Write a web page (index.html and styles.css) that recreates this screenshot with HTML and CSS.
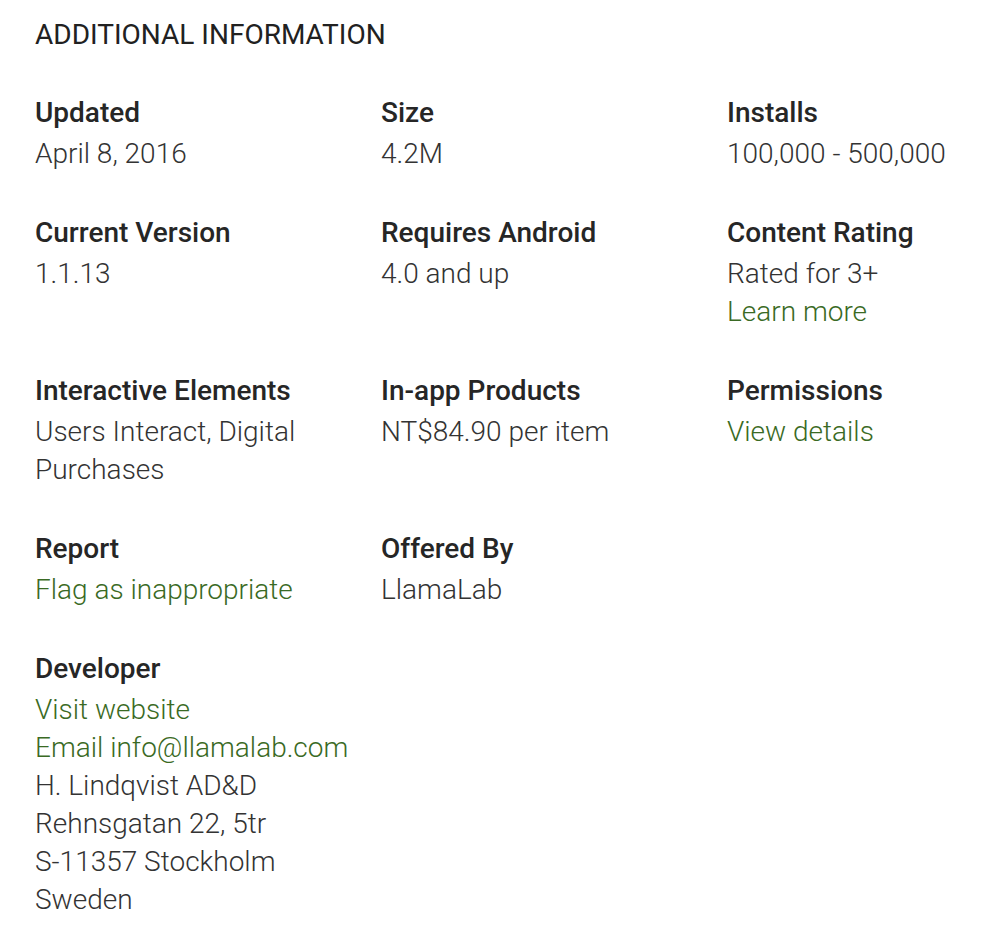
FILE: index.html
```html
<!DOCTYPE html>
<html lang="en">
<head>
<meta charset="utf-8">
<title>Additional Information</title>
<link rel="stylesheet" href="styles.css">
</head>
<body>
<section class="details">
  <h2 class="details-title">ADDITIONAL INFORMATION</h2>
  <div class="details-grid">
    <div class="meta">
      <div class="meta-label">Updated</div>
      <div class="meta-value">April 8, 2016</div>
    </div>
    <div class="meta">
      <div class="meta-label">Size</div>
      <div class="meta-value">4.2M</div>
    </div>
    <div class="meta">
      <div class="meta-label">Installs</div>
      <div class="meta-value">100,000 - 500,000</div>
    </div>

    <div class="meta">
      <div class="meta-label">Current Version</div>
      <div class="meta-value">1.1.13</div>
    </div>
    <div class="meta">
      <div class="meta-label">Requires Android</div>
      <div class="meta-value">4.0 and up</div>
    </div>
    <div class="meta">
      <div class="meta-label">Content Rating</div>
      <div class="meta-value">Rated for 3+</div>
      <a class="meta-link" href="#">Learn more</a>
    </div>

    <div class="meta">
      <div class="meta-label">Interactive Elements</div>
      <div class="meta-value">Users Interact, Digital Purchases</div>
    </div>
    <div class="meta">
      <div class="meta-label">In-app Products</div>
      <div class="meta-value">NT$84.90 per item</div>
    </div>
    <div class="meta">
      <div class="meta-label">Permissions</div>
      <a class="meta-link" href="#">View details</a>
    </div>

    <div class="meta">
      <div class="meta-label">Report</div>
      <a class="meta-link" href="#">Flag as inappropriate</a>
    </div>
    <div class="meta meta-wide">
      <div class="meta-label">Offered By</div>
      <div class="meta-value">LlamaLab</div>
    </div>

    <div class="meta">
      <div class="meta-label">Developer</div>
      <a class="meta-link" href="#">Visit website</a>
      <a class="meta-link" href="#">Email info@llamalab.com</a>
      <div class="meta-value">H. Lindqvist AD&amp;D<br>Rehnsgatan 22, 5tr<br>S-11357 Stockholm<br>Sweden</div>
    </div>
  </div>
</section>
</body>
</html>
```

FILE: styles.css
```css
html, body {
  margin: 0;
  background: #ffffff;
}

body {
  font-family: Roboto, "Noto Sans", Arial, sans-serif;
  color: #333333;
}

.details {
  padding: 18px 20px 20px 35px;
}

.details-title {
  margin: 0;
  font-size: 28px;
  font-weight: 400;
  line-height: 34px;
  color: #212121;
}

.details-grid {
  margin-top: 38px;
  display: grid;
  grid-template-columns: 346px 346px 1fr;
  row-gap: 37px;
}

.meta {
  display: flex;
  flex-direction: column;
  align-items: flex-start;
  padding-right: 16px;
}

.meta-wide {
  grid-column: span 2;
}

.meta-label {
  font-size: 28px;
  font-weight: 500;
  line-height: 45px;
  color: #262626;
}

.meta-value {
  font-size: 28px;
  font-weight: 300;
  line-height: 38px;
  color: #333333;
}

.meta-link {
  font-size: 28px;
  font-weight: 300;
  line-height: 38px;
  color: #3a6a24;
  text-decoration: none;
}
```
